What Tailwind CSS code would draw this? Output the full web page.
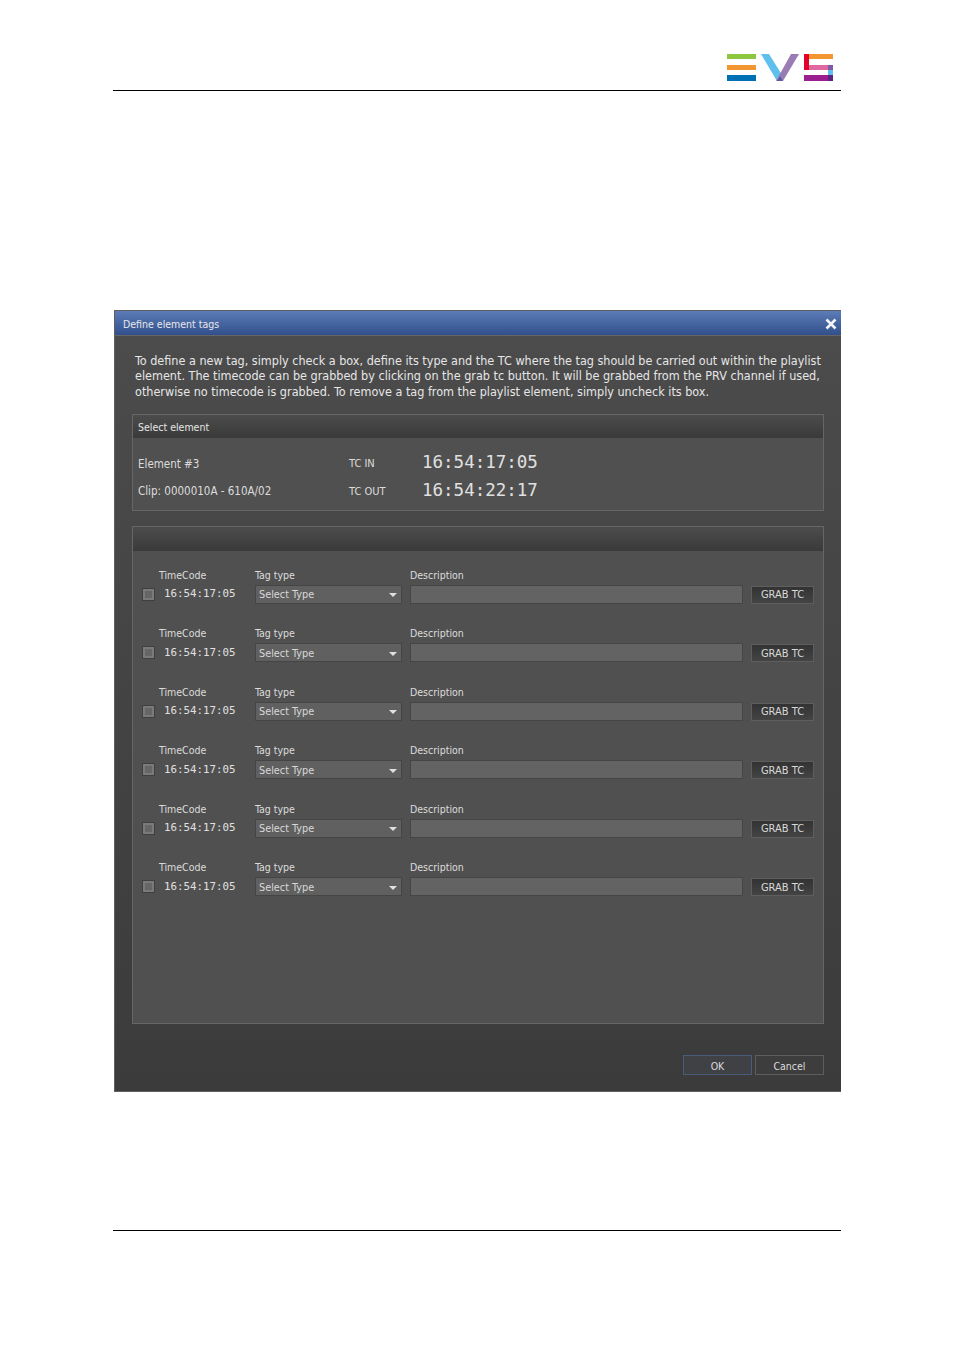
<!DOCTYPE html>
<html lang="en">
<head>
    <meta charset="UTF-8">
    <title>Define element tags</title>
    <script src="https://cdn.jsdelivr.net/npm/@tailwindcss/browser@4"></script>
</head>
<body class="bg-white h-[1349px] w-[954px] overflow-hidden font-['DejaVu_Sans_Condensed','DejaVu_Sans',sans-serif] [font-stretch:condensed]">
    <!-- Page header -->
    <header class="mx-[113px] w-[728px] h-[91px] border-b border-black flex justify-end items-start pt-[54px]">
        <svg width="106" height="27" viewBox="0 0 106 27" class="mr-[8px]">
            <rect x="0" y="0" width="29" height="5" fill="#8dc63f"/>
            <rect x="0" y="11" width="29" height="5" fill="#f39530"/>
            <rect x="0" y="21" width="29" height="6" fill="#0070b4"/>
            <polygon points="34,0 42,0 57,24 53,27 50,27" fill="#5fc0ee"/>
            <polygon points="64,0 72,0 56,27 49,27" fill="#9a7cb4"/>
            <polygon points="50,27 56,27 53,22" fill="#5b5aa5"/>
            <rect x="77" y="0" width="5" height="16" fill="#e4002b"/>
            <rect x="82" y="0" width="24" height="5" fill="#f39530"/>
            <rect x="82" y="11" width="19" height="5" fill="#e0679f"/>
            <rect x="101" y="11" width="5" height="5" fill="#7d5ba6"/>
            <rect x="101" y="16" width="5" height="5" fill="#5fc0ee"/>
            <rect x="77" y="21" width="24" height="6" fill="#9b1f8e"/>
            <rect x="101" y="21" width="5" height="6" fill="#5b2382"/>
        </svg>
    </header>

    <!-- Dialog -->
    <div class="ml-[114px] mt-[219px] w-[727px] h-[782px] border border-[#5f5f5f] border-r-0 bg-linear-to-b from-[#4c4c4c] to-[#3b3b3b] flex flex-col">
        <div class="h-[25px] shrink-0 bg-linear-to-b from-[#5c7cb8] to-[#31508b] border-b border-[#666] flex items-center justify-between pl-[8px] pr-[4px] pt-[3px] text-[10.5px] text-[#e8e8e8]">
            <span>Define element tags</span>
            <svg width="12" height="12" viewBox="0 0 12 12" class="-mt-[1px]"><path d="M1.5 1.5 L10.5 10.5 M10.5 1.5 L1.5 10.5" stroke="#f2f4f8" stroke-width="2.6"/></svg>
        </div>

        <p class="ml-[20px] mt-[17px] w-[700px] h-[46.5px] text-[12.5px] leading-[15.3px] text-[#e6e6e6] whitespace-nowrap">To define a new tag, simply check a box, define its type and the TC where the tag should be carried out within the playlist<br>element. The timecode can be grabbed by clicking on the grab tc button. It will be grabbed from the PRV channel if used,<br>otherwise no timecode is grabbed. To remove a tag from the playlist element, simply uncheck its box.</p>

        <!-- Select element -->
        <section class="ml-[17px] mt-[14px] w-[692px] h-[97px] border border-[#666] bg-[#505050]">
            <div class="h-[23px] bg-linear-to-b from-[#4c4c4c] to-[#3a3a3a] pl-[5px] pt-[3px] flex items-center text-[10.5px] text-[#e6e6e6]">Select element</div>
            <div class="grid grid-cols-[211px_73px_1fr] pl-[5px] pt-[10px] text-[#dcdcdc] text-[11.5px]">
                <div class="h-[29px] flex items-center pt-[5px]">Element #3</div>
                <div class="h-[29px] flex items-center pt-[4px] text-[11px]">TC IN</div>
                <div class="h-[29px] flex items-center font-['DejaVu_Sans_Mono',monospace] text-[17.5px] text-[#e0e0e0]">16:54:17:05</div>
                <div class="h-[29px] flex items-center pt-[1px]">Clip: 0000010A - 610A/02</div>
                <div class="h-[29px] flex items-center pt-[2px] text-[11px]">TC OUT</div>
                <div class="h-[29px] flex items-center pb-[2px] font-['DejaVu_Sans_Mono',monospace] text-[17.5px] text-[#e0e0e0]">16:54:22:17</div>
            </div>
        </section>

        <!-- Tags -->
        <section class="ml-[17px] mt-[15px] w-[692px] h-[498px] border border-[#666] bg-[#505050]">
            <div class="h-[24px] bg-linear-to-b from-[#4c4c4c] to-[#3a3a3a]"></div>
            <div id="rows" class="pt-[17.3px] pl-[10px]"></div>
        </section>

        <div class="flex justify-end gap-[3px] mt-[31px] mr-[17px] text-[10.5px] text-[#dcdcdc]">
            <button class="w-[69px] h-[20px] pt-[3px] border border-[#4a5c7c] bg-[#3f4145]">OK</button>
            <button class="w-[69px] h-[20px] pt-[3px] border border-[#5e5e5e] bg-[#3d3d3d]">Cancel</button>
        </div>
    </div>

    <!-- Page footer rule -->
    <div class="ml-[113px] mt-[138px] w-[728px] border-t border-black"></div>

    <script>
        var row = `
        <div class="h-[58.5px] grid grid-cols-[16px_96px_155px_341px_63px] grid-rows-[16px_19px] gap-y-[1px] text-[10.5px] text-[#dcdcdc]">
            <div></div>
            <div class="flex items-center">TimeCode</div>
            <div class="flex items-center">Tag type</div>
            <div class="flex items-center">Description</div>
            <div></div>
            <div class="flex items-center"><span class="w-[11px] h-[11px] border-2 border-[#7a7a7a] bg-[#666] outline outline-[#3f3f3f]"></span></div>
            <div class="flex items-center pl-[5px] font-['DejaVu_Sans_Mono',monospace] text-[10.8px] text-[#e0e0e0]">16:54:17:05</div>
            <div class="w-[147px] flex items-center justify-between pl-[3px] pr-[4px] pt-[2px] border border-[#454545] bg-[#606060] text-[10.8px] text-[#d8d8d8]">Select Type<svg width="8" height="4" viewBox="0 0 8 4"><path d="M0 0 H8 L4 4 Z" fill="#e0e0e0"/></svg></div>
            <div class="w-[333px] border border-[#454545] bg-[#636363]"></div>
            <div class="h-[18px] mt-[1px] pt-[1px] flex items-center justify-center border border-[#5e5e5e] bg-linear-to-b from-[#333] to-[#444] text-[11px] text-[#d8d8d8]">GRAB TC</div>
        </div>`;
        document.getElementById('rows').innerHTML = row.repeat(6);
    </script>
</body>
</html>
